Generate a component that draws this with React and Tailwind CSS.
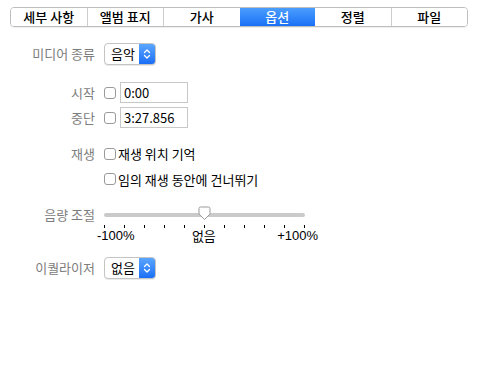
import React from "react";

const tabs = ["세부 사항", "앨범 표지", "가사", "옵션", "정렬", "파일"];

function Checkbox() {
  return <span className="inline-block h-[12px] w-[12px] shrink-0 rounded-[3px] border border-[#9a9a9a] bg-white" />;
}

function PopUp({ value }) {
  return (
    <div className="flex h-[22px] w-[52px] items-stretch overflow-hidden rounded-[4px] border border-[#c4c4c4] bg-white shadow-[0_1px_0_rgba(0,0,0,0.08)]">
      <span className="flex flex-1 items-center pl-[6px] text-[13px] text-black">{value}</span>
      <span className="flex w-[16px] items-center justify-center bg-gradient-to-b from-[#5aa5ff] to-[#1a6ef5]">
        <svg width="8" height="12" viewBox="0 0 8 12" fill="none" stroke="white" strokeWidth="1.3" strokeLinecap="round" strokeLinejoin="round">
          <path d="M1.5 4.5 L4 2 L6.5 4.5" />
          <path d="M1.5 7.5 L4 10 L6.5 7.5" />
        </svg>
      </span>
    </div>
  );
}

function Label({ children }) {
  return <span className="text-right text-[13px] text-[#7d7d7d]">{children}</span>;
}

export default function App() {
  const ticks = Array.from({ length: 11 }, (_, i) => i);
  return (
    <div
      className="h-[388px] w-[478px] bg-white text-[13px] text-black"
      style={{ fontFamily: '"Noto Sans CJK KR", "Liberation Sans", sans-serif' }}
    >
      {/* Tabs */}
      <div className="px-[10px] pt-[7px]">
        <div className="flex h-[20px] overflow-hidden rounded-[4px] border border-[#bdbdbd] shadow-[0_1px_0_rgba(0,0,0,0.06)]">
          {tabs.map((t, i) => (
            <div
              key={t}
              className={
                t === "옵션"
                  ? "flex flex-1 items-center justify-center bg-gradient-to-b from-[#4b9dfd] to-[#1970f6] text-[13px] font-medium text-white"
                  : "flex flex-1 items-center justify-center bg-white text-[13px] font-medium text-black" +
                    (i > 0 && tabs[i - 1] !== "옵션" ? " border-l border-[#cdcdcd]" : "")
              }
            >
              {t}
            </div>
          ))}
        </div>
      </div>

      <div className="grid grid-cols-[95px_1fr] items-center gap-x-[9px] pt-[16px]">
        {/* Media type */}
        <Label>미디어 종류</Label>
        <PopUp value="음악" />

        {/* Start / stop */}
        <div className="col-span-2 h-[17px]" />
        <Label>시작</Label>
        <div className="flex items-center gap-[4px]">
          <Checkbox />
          <div className="flex h-[21px] w-[68px] items-center border border-[#c8c8c8] px-[3px] text-[13px]">0:00</div>
        </div>
        <div className="col-span-2 h-[4px]" />
        <Label>중단</Label>
        <div className="flex items-center gap-[4px]">
          <Checkbox />
          <div className="flex h-[21px] w-[68px] items-center border border-[#c8c8c8] px-[3px] text-[13px]">3:27.856</div>
        </div>

        {/* Playback */}
        <div className="col-span-2 h-[16px]" />
        <Label>재생</Label>
        <div className="flex items-center gap-[2px]">
          <Checkbox />
          <span>재생 위치 기억</span>
        </div>
        <div className="col-span-2 h-[6px]" />
        <span />
        <div className="flex items-center gap-[2px]">
          <Checkbox />
          <span>임의 재생 동안에 건너뛰기</span>
        </div>

        {/* Volume */}
        <div className="col-span-2 h-[16px]" />
        <Label>음량 조절</Label>
        <div className="relative h-[20px] w-[201px]">
          <div className="absolute left-0 right-0 top-[8px] h-[4px] rounded-full bg-[#cacaca]" />
          <svg className="absolute left-[94px] top-[1px]" width="13" height="15" viewBox="0 0 13 15">
            <path d="M1 2.5 Q1 1 2.5 1 H10.5 Q12 1 12 2.5 V8 L6.5 13.5 L1 8 Z" fill="white" stroke="#9b9b9b" strokeWidth="1" />
          </svg>
        </div>
        <span />
        <div className="-ml-[7px] w-[221px]">
          <div className="ml-[7px] flex h-[3px] w-[201px] justify-between">
            {ticks.map((i) => (
              <span key={i} className="h-[3px] w-px bg-black" />
            ))}
          </div>
          <div className="flex justify-between text-[13px] leading-[16px]" style={{ fontFamily: '"Liberation Sans", "Noto Sans CJK KR", sans-serif' }}>
            <span>-100%</span>
            <span className="mr-[4px]" style={{ fontFamily: '"Noto Sans CJK KR", sans-serif' }}>없음</span>
            <span>+100%</span>
          </div>
        </div>

        {/* Equalizer */}
        <div className="col-span-2 h-[13px]" />
        <Label>이퀄라이저</Label>
        <PopUp value="없음" />
      </div>
    </div>
  );
}
